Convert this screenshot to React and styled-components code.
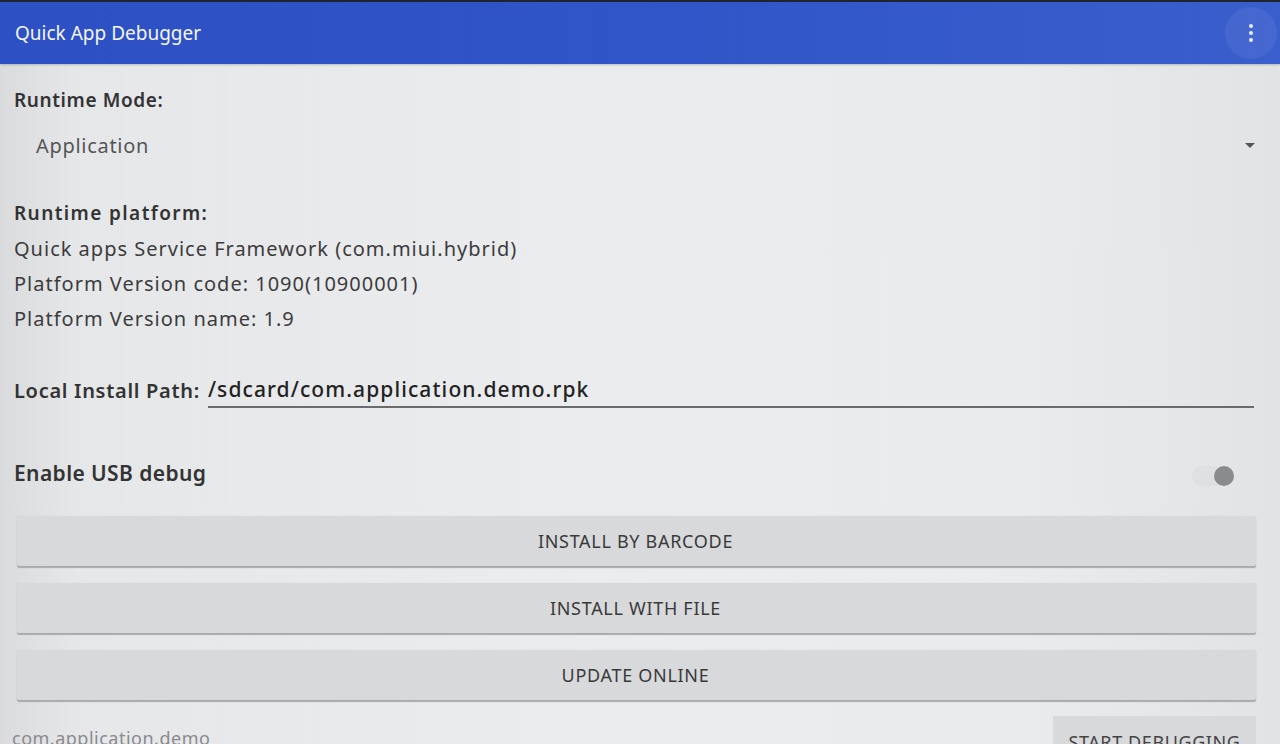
import React from 'react';
import styled, { createGlobalStyle } from 'styled-components';

const GlobalStyle = createGlobalStyle`
  html, body {
    margin: 0;
    padding: 0;
    background: #e4e5e7;
  }
  * { box-sizing: border-box; }
`;

const Screen = styled.div`
  width: 1280px;
  height: 744px;
  overflow: hidden;
  font-family: "Noto Sans", "Open Sans", sans-serif;
  color: #333;
  background: linear-gradient(90deg, #dadbdd 0%, #e6e7e9 6%, #ebecee 45%, #eaebed 80%, #e2e3e5 100%);
  display: flex;
  flex-direction: column;
`;

const AppBar = styled.header`
  height: 64px;
  flex-shrink: 0;
  background: linear-gradient(90deg, #2d50c4 0%, #3055c8 50%, #3a5ecc 100%);
  border-top: 2px solid #20242e;
  display: flex;
  align-items: center;
  justify-content: space-between;
  padding: 0 0 0 15px;
  box-shadow: 0 1px 2px rgba(0, 0, 0, 0.2);
`;

const Title = styled.h1`
  margin: 0;
  font-size: 19px;
  font-weight: 400;
  color: #f4f6fc;
`;

const MoreButton = styled.button`
  width: 52px;
  height: 52px;
  margin-right: 3px;
  border: none;
  border-radius: 50%;
  background: rgba(255, 255, 255, 0.06);
  display: flex;
  flex-direction: column;
  align-items: center;
  justify-content: center;
  gap: 3px;
  padding: 0;
`;

const Dot = styled.span`
  width: 4px;
  height: 4px;
  border-radius: 50%;
  background: #e8ecfa;
`;

const Content = styled.main`
  padding: 0 24px 0 14px;
  display: flex;
  flex-direction: column;
`;

const Label = styled.div`
  font-size: 19px;
  font-weight: 600;
  line-height: 24px;
  letter-spacing: ${p => p.$spacing || 0.6}px;
  color: #333;
  margin-top: ${p => p.$top}px;
`;

const Spinner = styled.div`
  height: 44px;
  margin-top: 11px;
  padding-left: 22px;
  display: flex;
  align-items: center;
  justify-content: space-between;
  font-size: 20px;
  letter-spacing: 0.7px;
  color: #555;
`;

const Caret = styled.span`
  width: 0;
  height: 0;
  border-left: 5px solid transparent;
  border-right: 5px solid transparent;
  border-top: 5px solid #555;
  margin-right: 1px;
`;

const InfoList = styled.div`
  margin-top: 6px;
`;

const InfoLine = styled.div`
  font-size: 20px;
  line-height: 35px;
  letter-spacing: 1px;
  color: #3c3c3c;
`;

const PathRow = styled.div`
  margin-top: 36px;
  display: flex;
  align-items: flex-end;
`;

const PathLabel = styled.span`
  font-size: 20px;
  font-weight: 600;
  line-height: 24px;
  letter-spacing: 0.7px;
  padding-bottom: 5px;
  color: #333;
`;

const PathInput = styled.div`
  flex: 1;
  margin-left: 8px;
  height: 36px;
  display: flex;
  align-items: center;
  border-bottom: 2px solid #6a6b6d;
  font-size: 21px;
  font-weight: 500;
  letter-spacing: 1.1px;
  color: #222;
  margin-right: 2px;
`;

const SwitchRow = styled.div`
  margin-top: 43px;
  height: 44px;
  display: flex;
  align-items: center;
  justify-content: space-between;
`;

const SwitchLabel = styled.span`
  font-size: 21px;
  font-weight: 600;
  letter-spacing: 0.4px;
  color: #333;
`;

const Switch = styled.div`
  position: relative;
  width: 42px;
  height: 20px;
  margin-right: 22px;
  margin-top: 6px;
  border-radius: 10px;
  background: #dfe0e2;
`;

const Thumb = styled.span`
  position: absolute;
  right: 0;
  top: 0;
  width: 20px;
  height: 20px;
  border-radius: 50%;
  background: #8a8b8d;
`;

const ButtonStack = styled.div`
  margin-top: 21px;
  padding-left: 3px;
  display: flex;
  flex-direction: column;
  gap: 17px;
`;

const ActionButton = styled.button`
  height: 50px;
  width: 100%;
  border: none;
  border-radius: 2px;
  background: #d8d9db;
  box-shadow: 0 2px 1px #a9aaac, 0 0 1px rgba(0, 0, 0, 0.15);
  font-family: "Noto Sans", "Open Sans", sans-serif;
  font-size: 18px;
  font-weight: 400;
  color: #3a3a3a;
  letter-spacing: 0.7px;
  padding-right: 8px;
`;

const Footer = styled.div`
  margin-top: 16px;
  display: flex;
  justify-content: space-between;
  align-items: flex-start;
`;

const PackageName = styled.span`
  margin-top: 10px;
  margin-left: -2px;
  font-size: 18px;
  letter-spacing: 0.5px;
  color: #8a8b8d;
`;

const StartButton = styled.button`
  width: 203px;
  height: 50px;
  border: none;
  background: #d8d9db;
  font-family: "Noto Sans", "Open Sans", sans-serif;
  font-size: 18px;
  letter-spacing: 0.6px;
  color: #444;
  padding-top: 14px;
  display: flex;
  justify-content: center;
  align-items: flex-start;
`;

export default function App() {
  return (
    <>
      <GlobalStyle />
      <Screen>
        <AppBar>
          <Title>Quick App Debugger</Title>
          <MoreButton aria-label="More options">
            <Dot />
            <Dot />
            <Dot />
          </MoreButton>
        </AppBar>
        <Content>
          <Label $top={24} $spacing={0.6}>Runtime Mode:</Label>
          <Spinner>
            <span>Application</span>
            <Caret />
          </Spinner>

          <Label $top={34} $spacing={1.4}>Runtime platform:</Label>
          <InfoList>
            <InfoLine>Quick apps Service Framework (com.miui.hybrid)</InfoLine>
            <InfoLine>Platform Version code: 1090(10900001)</InfoLine>
            <InfoLine>Platform Version name: 1.9</InfoLine>
          </InfoList>

          <PathRow>
            <PathLabel>Local Install Path:</PathLabel>
            <PathInput>/sdcard/com.application.demo.rpk</PathInput>
          </PathRow>

          <SwitchRow>
            <SwitchLabel>Enable USB debug</SwitchLabel>
            <Switch>
              <Thumb />
            </Switch>
          </SwitchRow>

          <ButtonStack>
            <ActionButton>INSTALL BY BARCODE</ActionButton>
            <ActionButton>INSTALL WITH FILE</ActionButton>
            <ActionButton>UPDATE ONLINE</ActionButton>
          </ButtonStack>

          <Footer>
            <PackageName>com.application.demo</PackageName>
            <StartButton>START DEBUGGING</StartButton>
          </Footer>
        </Content>
      </Screen>
    </>
  );
}
